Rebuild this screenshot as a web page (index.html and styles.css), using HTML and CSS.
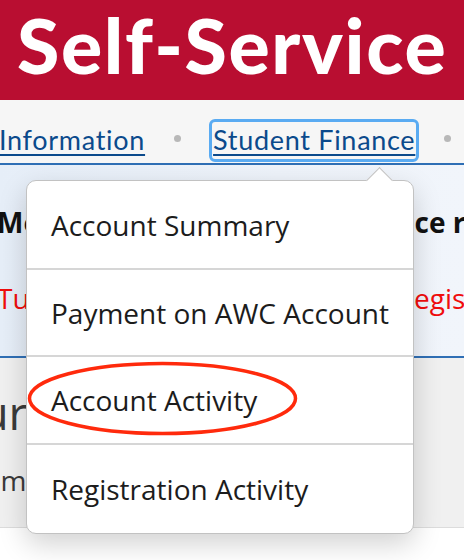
FILE: index.html
```html
<!DOCTYPE html>
<html lang="en">
<head>
  <meta charset="UTF-8">
  <title>Self-Service</title>
  <meta name="viewport" content="width=device-width, initial-scale=1.0">
  <link rel="stylesheet" href="styles.css">
</head>
<body>
  <header class="banner">
    <h1>Self-Service</h1>
  </header>

  <nav class="main-nav">
    <a href="#" class="nav-link">Information</a>
    <span class="nav-dot"></span>
    <a href="#" class="nav-link nav-focus">Student Finance</a>
    <span class="nav-dot"></span>
  </nav>

  <section class="notice">
    <p class="notice-title"><span>Message</span><span>balance reminder</span></p>
    <p class="notice-alert"><span>Tuition</span><span>Registration</span></p>
  </section>

  <section class="summary">
    <h2>Your</h2>
    <p>Sum</p>
  </section>

  <!-- Student Finance dropdown -->
  <div class="dropdown">
    <span class="dropdown-arrow"></span>
    <a href="#" class="dropdown-item">Account Summary</a>
    <a href="#" class="dropdown-item">Payment on AWC Account</a>
    <a href="#" class="dropdown-item">Account Activity</a>
    <a href="#" class="dropdown-item">Registration Activity</a>
  </div>

  <svg class="highlight" width="464" height="560" viewBox="0 0 464 560">
    <ellipse cx="162.5" cy="398.5" rx="133" ry="35" fill="none" stroke="#ff2a0c" stroke-width="3.5"/>
  </svg>
</body>
</html>
```

FILE: styles.css
```css
:root {
  --awc-red: #b90e31;
  --link-blue: #0b4a8c;
  --focus-blue: #5aabf2;
  --rule-blue: #2f6fb5;
  --text-dark: #1c1c1c;
}

body {
  margin: 0;
  font-family: "Open Sans", "Noto Sans", sans-serif;
  color: var(--text-dark);
  background: #ffffff;
  overflow: hidden;
}

.banner {
  background: var(--awc-red);
  height: 100px;
  padding-left: 17px;
  box-sizing: border-box;
  overflow: hidden;
}

.banner h1 {
  margin: 0;
  color: #ffffff;
  font-family: "Lato", sans-serif;
  font-weight: 900;
  font-size: 77px;
  line-height: 88px;
  letter-spacing: 1.6px;
  white-space: nowrap;
}

.main-nav {
  background: #f6f6f6;
  height: 65px;
  border-bottom: 2px solid var(--rule-blue);
  display: flex;
  align-items: flex-end;
  gap: 25px;
  padding-bottom: 1px;
  box-sizing: border-box;
  white-space: nowrap;
  overflow: hidden;
}

.nav-link {
  font-family: "Lato", sans-serif;
  font-size: 27px;
  line-height: 34px;
  letter-spacing: 0.7px;
  color: var(--link-blue);
  text-decoration: underline;
  text-decoration-thickness: 2px;
  text-underline-offset: 4px;
  border: 3px solid transparent;
  border-radius: 6px;
  padding: 1px 1px 2px;
}

.nav-link:first-child {
  margin-left: -5px;
}

.nav-dot {
  width: 7px;
  height: 7px;
  border-radius: 50%;
  background: #b8b8b8;
  flex-shrink: 0;
  margin: 0 3px 20px 0;
}

.nav-focus {
  border-color: var(--focus-blue);
}

.notice {
  background: linear-gradient(90deg, #e6eef8, #eef3fa 60%, #f1f5fb);
  height: 193px;
  border-bottom: 2px solid var(--rule-blue);
  padding-top: 38px;
  box-sizing: border-box;
  overflow: hidden;
}

.notice p {
  display: flex;
  margin: 0 0 0 -3px;
  font-size: 28px;
  line-height: 38px;
  white-space: nowrap;
}

.notice-title {
  font-weight: 700;
  color: #111111;
  gap: 219px;
}

.notice .notice-alert {
  margin-top: 38px;
  color: #f00d0d;
  gap: 309px;
}

.summary {
  background: #f0f0f0;
  height: 170px;
  border-bottom: 1px solid #dcdcdc;
  padding-top: 26px;
  box-sizing: border-box;
  overflow: hidden;
}

.summary h2 {
  margin: 0 0 0 -73px;
  font-size: 46px;
  font-weight: 400;
  line-height: 56px;
  color: #3a3a3a;
}

.summary p {
  margin: 22px 0 0 -32px;
  font-size: 28px;
  line-height: 36px;
  color: #3a3a3a;
}

.dropdown {
  position: absolute;
  left: 26px;
  top: 180px;
  width: 388px;
  background: #ffffff;
  border: 1.5px solid #c2c2c2;
  border-radius: 10px;
  box-shadow: 0 10px 28px rgba(0, 0, 0, 0.18);
  box-sizing: border-box;
  display: flex;
  flex-direction: column;
}

.dropdown-arrow {
  position: absolute;
  top: -10px;
  right: 24px;
  width: 18px;
  height: 18px;
  background: #ffffff;
  border-top: 1.5px solid #c2c2c2;
  border-left: 1.5px solid #c2c2c2;
  transform: rotate(45deg);
}

.dropdown-item {
  height: 88px;
  box-sizing: border-box;
  display: flex;
  align-items: center;
  padding-left: 24px;
  font-size: 28px;
  color: var(--text-dark);
  text-decoration: none;
  border-top: 2px solid #d6d6d6;
  white-space: nowrap;
}

.dropdown-item:first-of-type {
  border-top: none;
  height: 87px;
}

.dropdown-item:nth-of-type(2) {
  height: 87px;
}

.dropdown-item:last-child {
  height: 90px;
}

.highlight {
  position: absolute;
  left: 0;
  top: 0;
  pointer-events: none;
}
```
